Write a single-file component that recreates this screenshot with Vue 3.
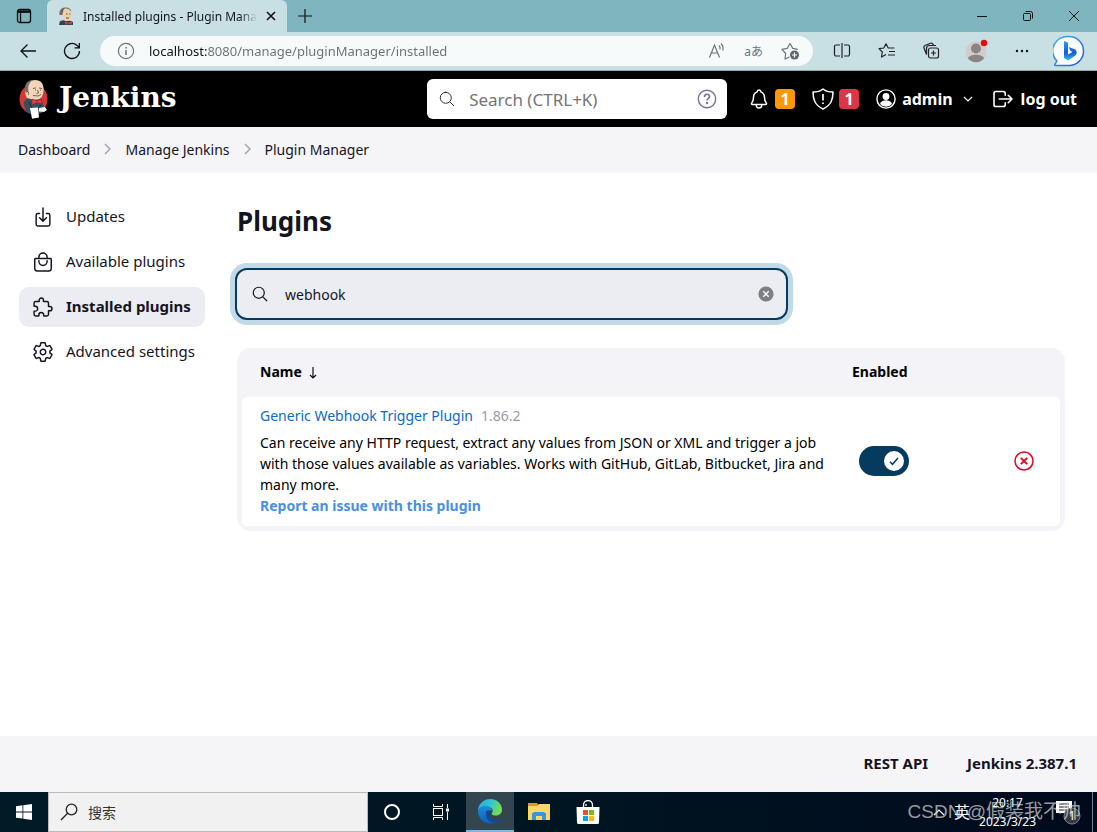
<script setup>
import { ref } from 'vue'

const address = ref('localhost:8080/manage/pluginManager/installed')
const filter = ref('webhook')
const enabled = ref(true)

const crumbs = ['Dashboard', 'Manage Jenkins', 'Plugin Manager']

const tasks = [
  {
    label: 'Updates',
    paths: [
      'M336 176h40a40 40 0 0140 40v208a40 40 0 01-40 40H136a40 40 0 01-40-40V216a40 40 0 0140-40h40',
      'M176 272l80 80 80-80M256 48v288',
    ],
  },
  {
    label: 'Available plugins',
    paths: [
      'M80 176a16 16 0 00-16 16v216c0 30.24 25.76 56 56 56h272c30.24 0 56-24.51 56-54.75V192a16 16 0 00-16-16zM160 176v-32a96 96 0 0196-96h0a96 96 0 0196 96v32',
      'M160 224v16a96 96 0 0096 96h0a96 96 0 0096-96v-16',
    ],
  },
  {
    label: 'Installed plugins',
    active: true,
    paths: [
      'M413.66 246.1H386a2 2 0 01-2-2v-77.17A38.94 38.94 0 00345.07 128H267.9a2 2 0 01-2-2V98.34c0-27.14-21.5-49.86-48.64-50.33a49.53 49.53 0 00-50.4 49.51V126a2 2 0 01-2 2H87.62A39.74 39.74 0 0048 167.62V238a2 2 0 002 2h26.91c29.37 0 53.68 25.48 54.09 54.85.42 29.87-23.51 57.15-53.29 57.15H50a2 2 0 00-2 2v70.38A39.74 39.74 0 0087.62 464H158a2 2 0 002-2v-20.93c0-30.28 24.75-56.35 55-57.06 30.1-.7 57 20.31 57 50.28V462a2 2 0 002 2h71.14A38.93 38.93 0 00384 425.07v-78a2 2 0 012-2h28.48c27.63 0 49.52-22.67 49.52-50.4s-23.2-48.57-50.34-48.57z',
    ],
  },
  {
    label: 'Advanced settings',
    paths: [
      'M262.29 192.31a64 64 0 1057.4 57.4 64.13 64.13 0 00-57.4-57.4zM416.39 256a154.34 154.34 0 01-1.53 20.79l45.21 35.46a10.81 10.81 0 012.45 13.75l-42.77 74a10.81 10.81 0 01-13.14 4.59l-44.9-18.08a16.11 16.11 0 00-15.17 1.75A164.48 164.48 0 01325 400.8a15.94 15.94 0 00-8.82 12.14l-6.73 47.89a11.08 11.08 0 01-10.68 9.17h-85.54a11.11 11.11 0 01-10.69-8.87l-6.72-47.82a16.07 16.07 0 00-9-12.22 155.3 155.3 0 01-21.46-12.57 16 16 0 00-15.11-1.71l-44.89 18.07a10.81 10.81 0 01-13.14-4.58l-42.77-74a10.8 10.8 0 012.45-13.75l38.21-30a16.05 16.05 0 006-14.08c-.36-4.17-.58-8.33-.58-12.5s.21-8.27.58-12.35a16 16 0 00-6.07-13.94l-38.19-30A10.81 10.81 0 0149.48 186l42.77-74a10.81 10.81 0 0113.14-4.59l44.9 18.08a16.11 16.11 0 0015.17-1.75A164.48 164.48 0 01187 111.2a15.94 15.94 0 008.82-12.14l6.73-47.89A11.08 11.08 0 01213.23 42h85.54a11.11 11.11 0 0110.69 8.87l6.72 47.82a16.07 16.07 0 009 12.22 155.3 155.3 0 0121.46 12.57 16 16 0 0015.11 1.71l44.89-18.07a10.81 10.81 0 0113.14 4.58l42.77 74a10.8 10.8 0 01-2.45 13.75l-38.21 30a16.05 16.05 0 00-6.05 14.08c.33 4.14.55 8.3.55 12.47z',
    ],
  },
]
</script>

<template>
  <div class="screen">
    <div class="tabstrip">
      <button class="tab-menu" aria-label="Tab actions">
        <svg width="16" height="16" viewBox="0 0 16 16" fill="none" stroke="#111" stroke-width="1.3">
          <rect x="1.5" y="1.5" width="13" height="13" rx="2" />
          <path d="M1.5 3.6h13" stroke-width="2.6" />
          <path d="M4.500 5v9" stroke-width="1.300" />
        </svg>
      </button>
      <div class="tab">
        <svg width="18" height="18" viewBox="0 0 18 18">
          <path d="M2 18l1-4 5-1 6 1 2 1v3z" fill="#2f4350" />
          <path d="M4 6c0-4 3-5 6-5s5 3 4.500 7-2 6-5 6-3-2-4-4-2-2-1.500-4z" fill="#efd0ad" />
          <path d="M2.600 8C1.600 3 5 .4 9 .6c3 0 5 2 5.400 4C12 2 8 2 6.500 3L5.400 8z" fill="#706a65" />
          <path d="M7 2c3-1.200 6 .2 7 3L13 7 7 6z" fill="#efd0ad" />
          <path d="M9 7h1.500m1.800 0h1M9 11h3" stroke="#5b4a42" />
          <path d="M8 14l3 1.500 4-1.500v3.500l-4-1-3 1.500z" fill="#d33833" />
        </svg>
        <span class="tab-title">Installed plugins - Plugin Manager</span>
        <button class="tab-close" aria-label="Close tab">
          <svg width="10" height="10" viewBox="0 0 10 10" stroke="#111" stroke-width="1.600"><path d="M1 1l8 8M9 1L1 9" /></svg>
        </button>
      </div>
      <button class="tab-new" aria-label="New tab">
        <svg width="16" height="16" viewBox="0 0 16 16" stroke="#111" stroke-width="1.200"><path d="M8 1v14M1 8h14" /></svg>
      </button>
      <div class="window-buttons">
        <button aria-label="Minimize"><svg width="12" height="12" viewBox="0 0 12 12" stroke="#111"><path d="M1 6.500h10" /></svg></button>
        <button aria-label="Restore">
          <svg width="12" height="12" viewBox="0 0 12 12" fill="none" stroke="#111"><rect x="1.500" y="3.500" width="7" height="7" rx="1" /><path d="M3.500 1.500h5a2 2 0 012 2v5" /></svg>
        </button>
        <button aria-label="Close"><svg width="12" height="12" viewBox="0 0 12 12" stroke="#111"><path d="M1 1l10 10M11 1L1 11" /></svg></button>
      </div>
    </div>

    <div class="toolbar">
      <button class="nav-button" aria-label="Back">
        <svg width="18" height="18" viewBox="0 0 18 18" fill="none" stroke="#111" stroke-width="1.300"><path d="M17 9H2M8.500 2.500L2 9l6.500 6.500" /></svg>
      </button>
      <button class="nav-button" aria-label="Refresh">
        <svg width="18" height="18" viewBox="0 0 18 18" fill="none" stroke="#111" stroke-width="1.300"><path d="M16.500 9A7.500 7.500 0 1114 3.400L16 5.500M16.300 1v4.800h-4.800" /></svg>
      </button>
      <div class="address">
        <svg width="18" height="18" viewBox="0 0 18 18" fill="none" stroke="#6b7478" stroke-width="1.200">
          <circle cx="9" cy="9" r="7.600" /><path d="M9 8v5M9 5v1.500" stroke-width="1.500" />
        </svg>
        <input v-model="address" type="text" aria-label="Address" spellcheck="false" />
        <button aria-label="Read aloud">
          <svg width="18" height="18" viewBox="0 0 18 18" fill="none" stroke="#6b7478" stroke-width="1.200"><path d="M1.500 15.500L6.500 3l5 12.500M3.400 11h6.200M11 3.500c1 1 1.300 2.500 1 4M13 1.500c2 2 2.500 4.500 1.700 7" /></svg>
        </button>
        <button aria-label="Translate" class="translate">aあ</button>
        <button aria-label="Add to favourites">
          <svg width="20" height="18" viewBox="0 0 20 18" fill="none" stroke="#6b7478" stroke-width="1.200">
            <path d="M8.500 15L4 17l.700-5.500L1 7.300l5.300-1L9 1.500l2.700 4.800 5 1" stroke-linejoin="round" />
            <circle cx="13.500" cy="13" r="4.500" fill="#5d676b" stroke="none" /><path d="M13.500 10.500v5M11 13h5" stroke="#fff" />
          </svg>
        </button>
      </div>
      <div class="browser-actions">
        <button aria-label="Split screen">
          <svg width="18" height="18" viewBox="0 0 18 18" fill="none" stroke="#222" stroke-width="1.200"><path d="M7 3H3a1.500 1.500 0 00-1.500 1.500v8A1.500 1.500 0 003 14h4M11 3h4a1.500 1.500 0 011.500 1.500v8A1.500 1.500 0 0115 14h-4M9 1v15" /></svg>
        </button>
        <button aria-label="Favourites">
          <svg width="18" height="18" viewBox="0 0 18 18" fill="none" stroke="#222" stroke-width="1.200" stroke-linejoin="round"><path d="M8 12.500L3.500 15l.800-5L1 6.700l4.800-.700L8 1.800 10.200 6h6.300M11 9.500h6M10 13h7" /></svg>
        </button>
        <button aria-label="Collections">
          <svg width="18" height="18" viewBox="0 0 18 18" fill="none" stroke="#222" stroke-width="1.200"><rect x="5.500" y="6" width="10" height="10" rx="2" /><path d="M10.500 8.500v5M8 11h5M3.500 12.500L1 6a2 2 0 011-2.500L7.500 1.200a2 2 0 012.500 1l.5 1.300M3.500 12.500V6.500a3 3 0 013-3H13" /></svg>
        </button>
        <button aria-label="Profile">
          <svg width="24" height="24" viewBox="0 0 24 24"><circle cx="11" cy="13" r="10.500" fill="#d2cdca" /><circle cx="11" cy="9.500" r="5" fill="#8a8482" /><path d="M3 19.500c1-5 15-5 16 0a10.500 10.500 0 01-16 0z" fill="#8a8482" /><circle cx="19" cy="4" r="3.200" fill="#e60b0b" /></svg>
        </button>
        <button aria-label="Settings and more">
          <svg width="18" height="18" viewBox="0 0 18 18" fill="#111"><circle cx="4" cy="9" r="1.200" /><circle cx="9" cy="9" r="1.200" /><circle cx="14" cy="9" r="1.200" /></svg>
        </button>
      </div>
      <button class="bing" aria-label="Discover">
        <svg width="32" height="32" viewBox="0 0 32 32">
          <defs>
            <linearGradient id="ring" x1="0" y1="0" x2="1" y2="1"><stop offset="0" stop-color="#3bb4e9" /><stop offset="1" stop-color="#2555d9" /></linearGradient>
            <linearGradient id="bee" x1="0" y1="0" x2="0" y2="1"><stop offset="0" stop-color="#2d9bee" /><stop offset=".6" stop-color="#1b57d8" /><stop offset="1" stop-color="#29c8e8" /></linearGradient>
          </defs>
          <path d="M16 1.500a14.500 14.500 0 110 29H2.500c-.8 0-1-.8-.4-1.500l1.700-3A14.500 14.500 0 0116 1.500z" fill="#fbfdff" stroke="url(#ring)" stroke-width="1.500" />
          <path d="M11 6l4 1.500v12l4.500-2.500-2.200-1.200-1.500-3.800 6 2.200c2.500 1.200 2.500 5 .200 6.600L15 25.500l-4-2.500z" fill="url(#bee)" />
        </svg>
      </button>
    </div>

    <header class="app-header">
      <a class="brand" href="#">
        <svg width="30" height="40" viewBox="0 0 30 40">
          <ellipse cx="14.500" cy="20" rx="14" ry="15" fill="#d33833" />
          <path d="M7 20l-2 3c0 5 1 8 4 11l6 2 8-2 2-6-3-8-6-3z" fill="#335061" />
          <path d="M8 19c-2-3-2-6-1-9C7 4 11 1 16 1c6 0 9 4 8.500 10 0 5-2 9-6 9.500C14 21 11 20 8 19z" fill="#f0d6b7" />
          <path d="M6 12C5 6 8 1.500 14 .800 9.500 4 9 7 9.500 12L8 14z" fill="#777069" />
          <path d="M14 9.500l3-.6M20 9l3 .5M16 11h1m4 0h1M18.500 11l1 3-2 .5M14 16.500l5 .5 3-1.500M8 12l2 2-1 2" fill="none" stroke="#5b4438" stroke-width=".8" />
          <path d="M13 20l5 2 4-2 1 5-5-1.500L13 26z" fill="#ef3d3a" stroke="#801c1c" stroke-width=".5" />
          <path d="M10 23l6 12 6-9" fill="none" stroke="#1b2b36" />
          <path d="M11 29l8-.5 1 10-7 1.300z" fill="#fff" />
          <path d="M20 29l6-1 2 3-3 2-5-.5z" fill="#f4f4f4" />
        </svg>
        <span>Jenkins</span>
      </a>
      <label class="site-search">
        <svg width="18" height="18" viewBox="0 0 512 512" class="line thin"><path d="M221.090 64a157.090 157.090 0 10157.090 157.090A157.100 157.100 0 00221.090 64zM338.290 338.290L448 448" /></svg>
        <input type="text" placeholder="Search (CTRL+K)" aria-label="Search" />
        <a href="#" aria-label="Search help">
          <svg width="20" height="20" viewBox="0 0 20 20" fill="none" stroke="#73739a" stroke-width="1.400"><circle cx="10" cy="10" r="8.700" /><path d="M7.500 8c0-3.500 5-3.500 5-.6 0 1.900-2.400 2-2.400 4" stroke-width="1.600" /><circle cx="10.100" cy="14" r=".5" fill="#73739a" /></svg>
        </a>
      </label>
      <nav class="account">
        <button class="alert" aria-label="Notifications, 1">
          <svg width="22" height="22" viewBox="0 0 512 512" class="line"><path d="M427.680 351.430C402 320 383.870 304 383.870 217.350 383.870 138 343.350 109.730 310 96c-4.430-1.820-8.600-6-9.950-10.550C294.200 65.540 277.800 48 256 48s-38.210 17.550-44 37.470c-1.350 4.600-5.520 8.710-9.950 10.530-33.390 13.750-73.870 41.920-73.870 121.350C128.130 304 110 320 84.320 351.430 73.680 364.450 83 384 101.610 384h308.880c18.510 0 27.770-19.610 17.190-32.570zM320 384v16a64 64 0 01-128 0v-16" /></svg>
          <span class="badge orange">1</span>
        </button>
        <button class="alert" aria-label="Security warnings, 1">
          <svg width="22" height="22" viewBox="0 0 22 22" fill="none" stroke="#fff" stroke-width="1.500" stroke-linejoin="round"><path d="M11 1C8.500 3 5 4 1 4c0 8 2 13 10 17 8-4 10-9 10-17-4 0-7.500-1-10-3z" /><path d="M11 6v6.500M11 14.500V16" stroke-width="1.700" /></svg>
          <span class="badge red">1</span>
        </button>
        <a href="#" class="user">
          <svg width="20" height="20" viewBox="0 0 20 20"><circle cx="10" cy="10" r="9.100" fill="none" stroke="#fff" stroke-width="1.400" /><circle cx="10" cy="7.500" r="3.400" fill="#fff" /><path d="M4 15c1-5 11-5 12 0a8 8 0 01-12 0z" fill="#fff" /></svg>
          <span>admin</span>
          <svg width="10" height="10" viewBox="0 0 10 10" fill="none" stroke="#fff" stroke-width="1.200"><path d="M1 3l4 4 4-4" /></svg>
        </a>
        <a href="#" class="logout">
          <svg width="24" height="24" viewBox="0 0 512 512" class="line"><path d="M304 336v40a40 40 0 01-40 40H104a40 40 0 01-40-40V136a40 40 0 0140-40h152c22.090 0 48 17.910 48 40v40M368 336l80-80-80-80M176 256h256" /></svg>
          <span>log out</span>
        </a>
      </nav>
    </header>

    <nav class="breadcrumbs" aria-label="Breadcrumb">
      <template v-for="(crumb, i) in crumbs" :key="crumb">
        <svg v-if="i" width="7" height="12" viewBox="0 0 7 12" fill="none" stroke="#a4a4b8" stroke-width="1.500"><path d="M1 1l5 5-5 5" /></svg>
        <a href="#">{{ crumb }}</a>
      </template>
    </nav>

    <div class="page">
      <nav class="side" aria-label="Plugins">
        <a v-for="task in tasks" :key="task.label" href="#" :class="{ active: task.active }">
          <svg width="22" height="22" viewBox="0 0 512 512" class="line"><path v-for="d in task.paths" :key="d" :d="d" /></svg>
          <span>{{ task.label }}</span>
        </a>
      </nav>
      <main>
        <h1>Plugins</h1>
        <label class="filter">
          <svg width="18" height="18" viewBox="0 0 512 512" class="line"><path d="M221.090 64a157.090 157.090 0 10157.090 157.090A157.100 157.100 0 00221.090 64zM338.290 338.290L448 448" /></svg>
          <input v-model="filter" type="text" aria-label="Search installed plugins" />
          <button aria-label="Clear" @click="filter = ''">
            <svg width="16" height="16" viewBox="0 0 16 16"><circle cx="8" cy="8" r="7.600" fill="#7d7f82" /><path d="M5.300 5.300l5.400 5.400M10.700 5.300l-5.400 5.400" stroke="#fff" stroke-width="1.400" /></svg>
          </button>
        </label>
        <div class="table-frame">
          <table>
            <thead>
              <tr>
                <th>
                  Name
                  <svg width="8" height="12" viewBox="0 0 8 12" fill="none" stroke="#111" stroke-width="1.200"><path d="M4 0v11M1 8l3 3 3-3" /></svg>
                </th>
                <th class="col-enabled">Enabled</th>
                <td class="col-remove"></td>
              </tr>
            </thead>
            <tbody>
              <tr>
                <td>
                  <p class="plugin"><a href="#">Generic Webhook Trigger Plugin</a><span>1.86.2</span></p>
                  <p class="about">Can receive any HTTP request, extract any values from JSON or XML and trigger a job with those values available as variables. Works with GitHub, GitLab, Bitbucket, Jira and many more.</p>
                  <p><a class="report" href="#">Report an issue with this plugin</a></p>
                </td>
                <td>
                  <label class="toggle">
                    <input v-model="enabled" type="checkbox" aria-label="Enable Generic Webhook Trigger Plugin" />
                    <svg width="20" height="20" viewBox="0 0 20 20"><circle cx="10" cy="10" r="10" fill="#fff" /><path d="M6 10.800l2.500 2.500L14 7" fill="none" stroke="#043b5f" stroke-width="1.500" /></svg>
                  </label>
                </td>
                <td class="remove">
                  <button aria-label="Uninstall Generic Webhook Trigger Plugin">
                    <svg width="20" height="20" viewBox="0 0 20 20" fill="none" stroke="#e6001f" stroke-width="1.500"><circle cx="10" cy="10" r="9" /><path d="M6.800 6.800l6.400 6.400M13.200 6.800l-6.400 6.400" stroke-width="1.900" /></svg>
                  </button>
                </td>
              </tr>
            </tbody>
          </table>
        </div>
      </main>
    </div>

    <footer class="app-footer">
      <a href="#">REST API</a>
      <a href="#">Jenkins 2.387.1</a>
    </footer>

    <div class="taskbar">
      <button class="start" aria-label="Start">
        <svg width="16" height="16" viewBox="0 0 16 16" fill="#fff"><path d="M0 2.200l6.500-.9v6.200H0zM7.300 1.200L16 0v7.500H7.300zM0 8.400h6.500v6.200L0 13.700zM7.300 8.400H16V16l-8.700-1.200z" /></svg>
      </button>
      <label class="os-search">
        <svg width="18" height="18" viewBox="0 0 18 18" fill="none" stroke="#222" stroke-width="1.300"><circle cx="11.500" cy="6.500" r="5.300" /><path d="M7.600 10.200L1 17" /></svg>
        <input type="text" placeholder="搜索" aria-label="搜索" />
      </label>
      <div class="apps">
        <button aria-label="Cortana"><svg width="18" height="18" viewBox="0 0 18 18"><circle cx="9" cy="9" r="7" fill="none" stroke="#fff" stroke-width="2" /></svg></button>
        <button aria-label="Task view">
          <svg width="18" height="16" viewBox="0 0 18 16" fill="none" stroke="#fff"><rect x="1.500" y="4.500" width="9" height="7" /><path d="M1.500 0v2.500h9V0M1.500 16v-2.500h9V16M15.500 0v4M15.500 8v8" /><path d="M14 4.500h3v3h-3z" fill="#fff" stroke="none" /></svg>
        </button>
        <button class="current" aria-label="Microsoft Edge">
          <svg width="26" height="26" viewBox="0 0 26 26">
            <defs>
              <linearGradient id="edgeTop" x1="0" y1="0" x2="1" y2=".4"><stop offset="0" stop-color="#2fa8e0" /><stop offset=".5" stop-color="#30c4d2" /><stop offset="1" stop-color="#6fdd5a" /></linearGradient>
              <linearGradient id="edgeLow" x1="0" y1="0" x2="0" y2="1"><stop offset="0" stop-color="#1a8fe0" /><stop offset="1" stop-color="#0f5fb8" /></linearGradient>
            </defs>
            <path d="M1 12C2 5 7 1 13 1c7 0 12 5 12 10.500 0 4-3 6-6.500 6-3 0-4.500-1.200-3.500-2.500 1.500-2 1-5-3-6C8 8 3 9 1 12z" fill="url(#edgeTop)" />
            <path d="M1 13c0-3 4-5.500 8-5.300 4 .2 6.500 3 6.500 5.300-3-2-6 1-4.500 5s6 6 12 3c-2 3-6 4.500-10 4.500C6 25 1 20 1 13z" fill="url(#edgeLow)" />
            <path d="M9.500 13c-2 4 0 9 5 11.500 4 .5 7-1 9-3.500-6 2.500-10 1-12-3-.8-2 0-4 1.500-5-1.500-.8-3-.500-3.500 0z" fill="#0c4a9c" />
          </svg>
        </button>
        <button aria-label="File Explorer">
          <svg width="22" height="20" viewBox="0 0 22 20"><path d="M0 1h9l2 3H0z" fill="#e09a14" /><path d="M0 4h9l2-2h11v16H0z" fill="#fbd767" /><path d="M4 18v-6.500L6 10h10l2 1.500V18h-4v-4H8v4z" fill="#3d93dc" /></svg>
        </button>
        <button aria-label="Microsoft Store">
          <svg width="24" height="24" viewBox="0 0 24 24"><path d="M7.500 7V5a4.500 4.500 0 019 0v2M10 6V4" fill="none" stroke="#fff" stroke-width="1.300" /><path d="M.5 7h23l-.5 15.500a1.500 1.500 0 01-1.500 1.500h-19A1.500 1.500 0 011 22.500z" fill="#fff" /><path d="M7 10h5v5H7z" fill="#f25022" /><path d="M13 10h5v5h-5z" fill="#7fba00" /><path d="M7 16h5v5H7z" fill="#00a4ef" /><path d="M13 16h5v5h-5z" fill="#ffb900" /></svg>
        </button>
      </div>
      <div class="tray">
        <svg width="12" height="8" viewBox="0 0 12 8" fill="none" stroke="#fff" stroke-width="1.200"><path d="M1 7l5-5 5 5" /></svg>
        <span class="ime">英</span>
        <div class="clock"><span>20:17</span><span>2023/3/23</span></div>
        <svg width="26" height="26" viewBox="0 0 26 26">
          <path d="M1 2h16v12h-3v4l-4-4H1z" fill="#fff" /><path d="M4 5h10M4 8h10M4 11h10" stroke="#06121f" />
          <circle cx="17" cy="17" r="8" fill="#343b43" stroke="#777d82" />
          <text x="17" y="21" text-anchor="middle" font-size="12" fill="#fff">1</text>
        </svg>
        <span class="desktop-edge"></span>
      </div>
      <span class="watermark">CSDN @假装我不帅</span>
    </div>
  </div>
</template>

<style>
body {
  margin: 0;
}
</style>

<style scoped>
.screen {
  display: flex;
  flex-direction: column;
  min-height: 100vh;
  background: #fff;
  color: #14141f;
  font-family: "Noto Sans", "Noto Sans CJK SC", sans-serif;
  font-size: 14px;
  line-height: 21px;
}
.screen * {
  box-sizing: border-box;
}
svg {
  display: block;
  flex: none;
}
.line {
  fill: none;
  stroke: currentColor;
  stroke-width: 34;
  stroke-linecap: round;
  stroke-linejoin: round;
}
.thin {
  stroke-width: 28;
}
a {
  color: inherit;
  text-decoration: none;
}
button {
  display: flex;
  align-items: center;
  justify-content: center;
  padding: 0;
  border: 0;
  background: none;
  color: inherit;
  font: inherit;
}
input {
  min-width: 0;
  padding: 0;
  border: 0;
  outline: 0;
  background: none;
  color: inherit;
  font: inherit;
}

.tabstrip {
  display: flex;
  height: 32px;
  background: #7eb5bf;
  font-size: 12px;
}
.tab-menu {
  width: 47px;
}
.tab {
  display: flex;
  align-items: center;
  gap: 8px;
  width: 240px;
  padding: 0 10px;
  border-radius: 6px 6px 0 0;
  background: #c8dfe3;
}
.tab-title {
  flex: 1;
  overflow: hidden;
  white-space: nowrap;
  mask-image: linear-gradient(90deg, #000 90%, transparent);
}
.tab-close {
  width: 12px;
  height: 20px;
}
.tab-new {
  width: 36px;
}
.window-buttons {
  display: flex;
  margin-left: auto;
}
.window-buttons button {
  width: 46px;
}

.toolbar {
  display: flex;
  align-items: center;
  height: 39px;
  padding: 0 12px 0 6px;
  border-bottom: 1px solid #8fa9ad;
  background: #c8dfe3;
}
.nav-button {
  width: 44px;
  height: 32px;
}
.address {
  display: flex;
  flex: 1;
  align-items: center;
  gap: 18px;
  height: 30px;
  margin: 0 6px;
  padding: 0 12px 0 17px;
  border-radius: 15px;
  background: #f6fafb;
}
.address input {
  flex: 1;
  margin-left: -4px;
  background: linear-gradient(90deg, #111 59px, #667175 59px);
  background-clip: text;
  -webkit-text-fill-color: transparent;
  font-size: 13px;
}
.translate {
  color: #6b7478;
  font-size: 12px;
}
.browser-actions {
  display: flex;
}
.browser-actions button {
  width: 45px;
  height: 32px;
}
.bing {
  margin-left: 9px;
}

.app-header {
  display: flex;
  align-items: center;
  height: 56px;
  padding: 0 20px 0 19px;
  background: #000;
  color: #fff;
  font-size: 16px;
}
.brand {
  display: flex;
  align-items: center;
  gap: 10px;
  font: bold 28px/32px "DejaVu Serif", serif;
}
.brand span {
  padding-bottom: 3px;
}
.site-search {
  display: flex;
  align-items: center;
  gap: 13px;
  width: 300px;
  height: 40px;
  margin-left: auto;
  padding: 0 10px 0 11px;
  border-radius: 6px;
  background: #fff;
  color: #333;
}
.site-search input {
  flex: 1;
  font-size: 17px;
}
.site-search input::placeholder {
  color: #757575;
  opacity: 1;
}
.account {
  display: flex;
  align-items: center;
  margin-left: 21px;
  font-weight: 700;
}
.alert {
  gap: 5px;
  margin-right: 17px;
}
.badge {
  width: 20px;
  height: 20px;
  border-radius: 4px;
  line-height: 20px;
}
.orange {
  background: #ff9800;
}
.red {
  background: #dc3545;
}
.user,
.logout {
  display: flex;
  align-items: center;
}
.user {
  gap: 6px;
  margin-right: 18px;
}
.user svg:last-child {
  margin-left: 4px;
}
.logout {
  gap: 6px;
}

.breadcrumbs {
  display: flex;
  align-items: center;
  gap: 14px;
  height: 46px;
  padding: 0 18px 2px;
  background: #f5f5f8;
}

.page {
  display: flex;
  flex: 1;
  gap: 32px;
  padding: 24px 32px 24px 19px;
}
.side {
  display: flex;
  flex: none;
  flex-direction: column;
  gap: 5px;
  width: 186px;
  font-size: 15px;
}
.side a {
  display: flex;
  align-items: center;
  gap: 12px;
  height: 40px;
  padding: 0 13px;
  border-radius: 10px;
  white-space: nowrap;
}
.side span {
  padding-bottom: 2px;
}
.side .active {
  background: #ecedf2;
  font-weight: 700;
}
main {
  flex: 1;
  min-width: 0;
}
h1 {
  margin: 6px 0 29px;
  font-size: 26px;
  line-height: 36px;
}
.filter {
  display: flex;
  align-items: center;
  gap: 16px;
  width: 553px;
  max-width: 100%;
  height: 52px;
  margin-bottom: 28px;
  margin-left: -2px;
  padding: 0 12px 0 14px;
  border: 2px solid #043b5f;
  border-radius: 12px;
  background: #ecedf2;
  box-shadow: 0 0 0 5px #c2d9e8;
}
.filter input {
  flex: 1;
}
.table-frame {
  padding: 0 5px 5px;
  border-radius: 14px;
  background: #f3f3f8;
}
table {
  width: 100%;
  border-spacing: 0;
  table-layout: fixed;
}
th {
  height: 49px;
  padding: 0 0 2px 18px;
  color: #000;
  text-align: left;
}
th svg {
  display: inline-block;
  margin-left: 4px;
  vertical-align: -2px;
}
.col-enabled {
  width: 142px;
}
.col-remove {
  width: 84px;
}
tbody td {
  padding: 8px 0 10px 18px;
  background: #fff;
  color: #000;
}
tbody td:first-child {
  border-radius: 5px 0 0 5px;
}
tbody td:last-child {
  border-radius: 0 5px 5px 0;
}
p {
  margin: 0;
}
.plugin {
  margin-bottom: 6px;
}
.plugin a {
  color: #0b6aca;
}
.plugin span {
  margin-left: 8px;
  color: #9a9aaa;
}
.report {
  color: #4a90e2;
  font-weight: 700;
}
.toggle {
  display: flex;
  align-items: center;
  justify-content: flex-end;
  position: relative;
  width: 50px;
  height: 30px;
  margin-left: 7px;
  padding-right: 5px;
}
.toggle input {
  position: absolute;
  inset: 0;
  margin: 0;
  border-radius: 15px;
  appearance: none;
  background: #043b5f;
}
.toggle svg {
  position: relative;
}
.remove button {
  margin: 0 26px 0 auto;
}

.app-footer {
  display: flex;
  align-items: center;
  justify-content: flex-end;
  gap: 39px;
  height: 56px;
  padding: 0 20px 2px;
  background: #f5f5f8;
  font-size: 15px;
  font-weight: 700;
}

.taskbar {
  display: flex;
  position: relative;
  height: 40px;
  background: linear-gradient(90deg, #001a26, #001522 50%, #000a1c);
  color: #fff;
}
.start {
  width: 48px;
}
.os-search {
  display: flex;
  align-items: center;
  gap: 10px;
  width: 320px;
  padding: 0 11px;
  border: 1px solid #bbb;
  background: #f1f1f1;
  color: #333;
}
.os-search input {
  flex: 1;
}
.os-search input::placeholder {
  color: #333;
  opacity: 1;
}
.apps {
  display: flex;
  gap: 1px;
}
.apps button {
  width: 48px;
}
.apps .current {
  border-bottom: 2px solid #76b9ed;
  background: #33464f;
}
.tray {
  display: flex;
  align-items: center;
  gap: 9px;
  margin-left: auto;
}
.ime {
  font-size: 16px;
}
.clock {
  display: flex;
  flex-direction: column;
  align-items: center;
  font-size: 12px;
  line-height: 19px;
}
.tray svg + .desktop-edge {
  width: 5px;
  height: 40px;
  border-left: 1px solid #7a828b;
}
.clock + svg {
  margin: 0 2px 0 10px;
}
.watermark {
  position: absolute;
  right: 16px;
  bottom: 6px;
  color: rgba(220, 220, 220, 0.7);
  font-family: "Liberation Sans", "Noto Sans CJK SC", sans-serif;
  font-size: 19px;
  line-height: 28px;
  pointer-events: none;
}
</style>
